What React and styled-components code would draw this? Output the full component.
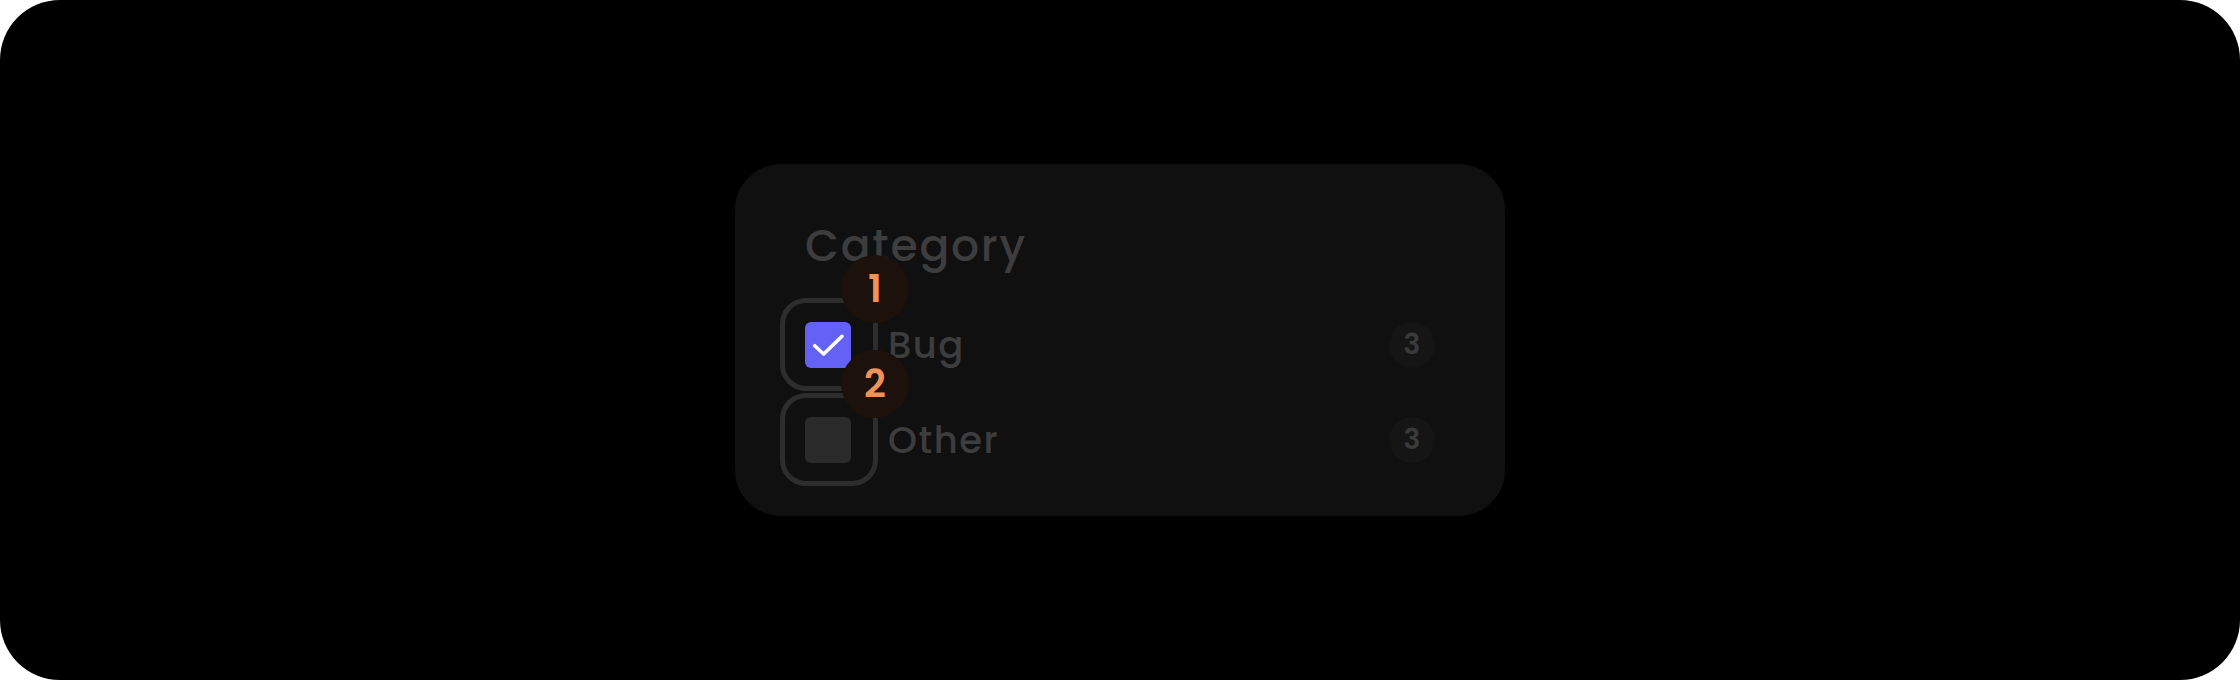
import React from 'react';
import styled, { createGlobalStyle } from 'styled-components';

const GlobalStyle = createGlobalStyle`
  html, body {
    margin: 0;
    padding: 0;
    background: #ffffff;
  }

  * {
    box-sizing: border-box;
  }
`;

const StyledFrame = styled.div`
  display: flex;
  align-items: center;
  justify-content: center;
  width: 2240px;
  height: 680px;
  background: #000000;
  border-radius: 60px;
  font-family: 'Poppins', 'Inter', 'Liberation Sans', sans-serif;
`;

const StyledCard = styled.div`
  width: 770px;
  padding: 60px 70px 53px;
  background: #101010;
  border-radius: 46px;
`;

const StyledHeading = styled.h2`
  margin: 0 0 54px;
  font-size: 44px;
  font-weight: 500;
  line-height: 44px;
  letter-spacing: 0.04em;
  color: #3d3d3d;
`;

const StyledList = styled.div`
  display: flex;
  flex-direction: column;
  gap: 49px;
`;

const StyledRow = styled.div`
  display: flex;
  align-items: center;
  height: 46px;
`;

const StyledCheckWrap = styled.div`
  position: relative;
  flex: none;
  width: 46px;
  height: 46px;
`;

const StyledRing = styled.span`
  position: absolute;
  top: -24px;
  right: -27px;
  bottom: -23px;
  left: -25px;
  border: 5px solid #2d2d2d;
  border-radius: 26px;
`;

const StyledBox = styled.span`
  position: relative;
  display: flex;
  align-items: center;
  justify-content: center;
  width: 46px;
  height: 46px;
  border-radius: 6px;
  background: ${({ checked }) => (checked ? '#6461f5' : '#2a2a2a')};
`;

const StyledOrder = styled.span`
  position: absolute;
  top: -67px;
  left: 36px;
  display: flex;
  align-items: center;
  justify-content: center;
  width: 68px;
  height: 68px;
  border-radius: 50%;
  background: #1c110b;
  color: #f0935a;
  font-size: 38px;
  font-weight: 600;
  line-height: 1;
`;

const StyledLabel = styled.span`
  margin-left: 37px;
  font-size: 37px;
  font-weight: 500;
  line-height: 46px;
  letter-spacing: 0.04em;
  color: #3d3d3d;
`;

const StyledCount = styled.span`
  display: flex;
  align-items: center;
  justify-content: center;
  flex: none;
  width: 46px;
  height: 46px;
  margin-left: auto;
  border-radius: 50%;
  background: #151515;
  color: #3a3a3a;
  font-size: 28px;
  font-weight: 600;
  line-height: 1;
`;

const CheckIcon = () => (
  <svg width="46" height="46" viewBox="0 0 46 46" fill="none">
    <path
      d="M9.7 23.7 L18.7 32 L37 14.3"
      stroke="#ffffff"
      strokeWidth="3.6"
      strokeLinecap="round"
      strokeLinejoin="round"
    />
  </svg>
);

const categories = [
  { label: 'Bug', count: 3, checked: true },
  { label: 'Other', count: 3, checked: false },
];

const App = () => {
  return (
    <>
      <GlobalStyle />
      <StyledFrame>
        <StyledCard>
          <StyledHeading>Category</StyledHeading>
          <StyledList>
            {categories.map((item, index) => (
              <StyledRow key={item.label}>
                <StyledCheckWrap>
                  <StyledRing />
                  <StyledBox checked={item.checked}>
                    {item.checked && <CheckIcon />}
                  </StyledBox>
                  <StyledOrder>{index + 1}</StyledOrder>
                </StyledCheckWrap>
                <StyledLabel>{item.label}</StyledLabel>
                <StyledCount>{item.count}</StyledCount>
              </StyledRow>
            ))}
          </StyledList>
        </StyledCard>
      </StyledFrame>
    </>
  );
};

export default App;
